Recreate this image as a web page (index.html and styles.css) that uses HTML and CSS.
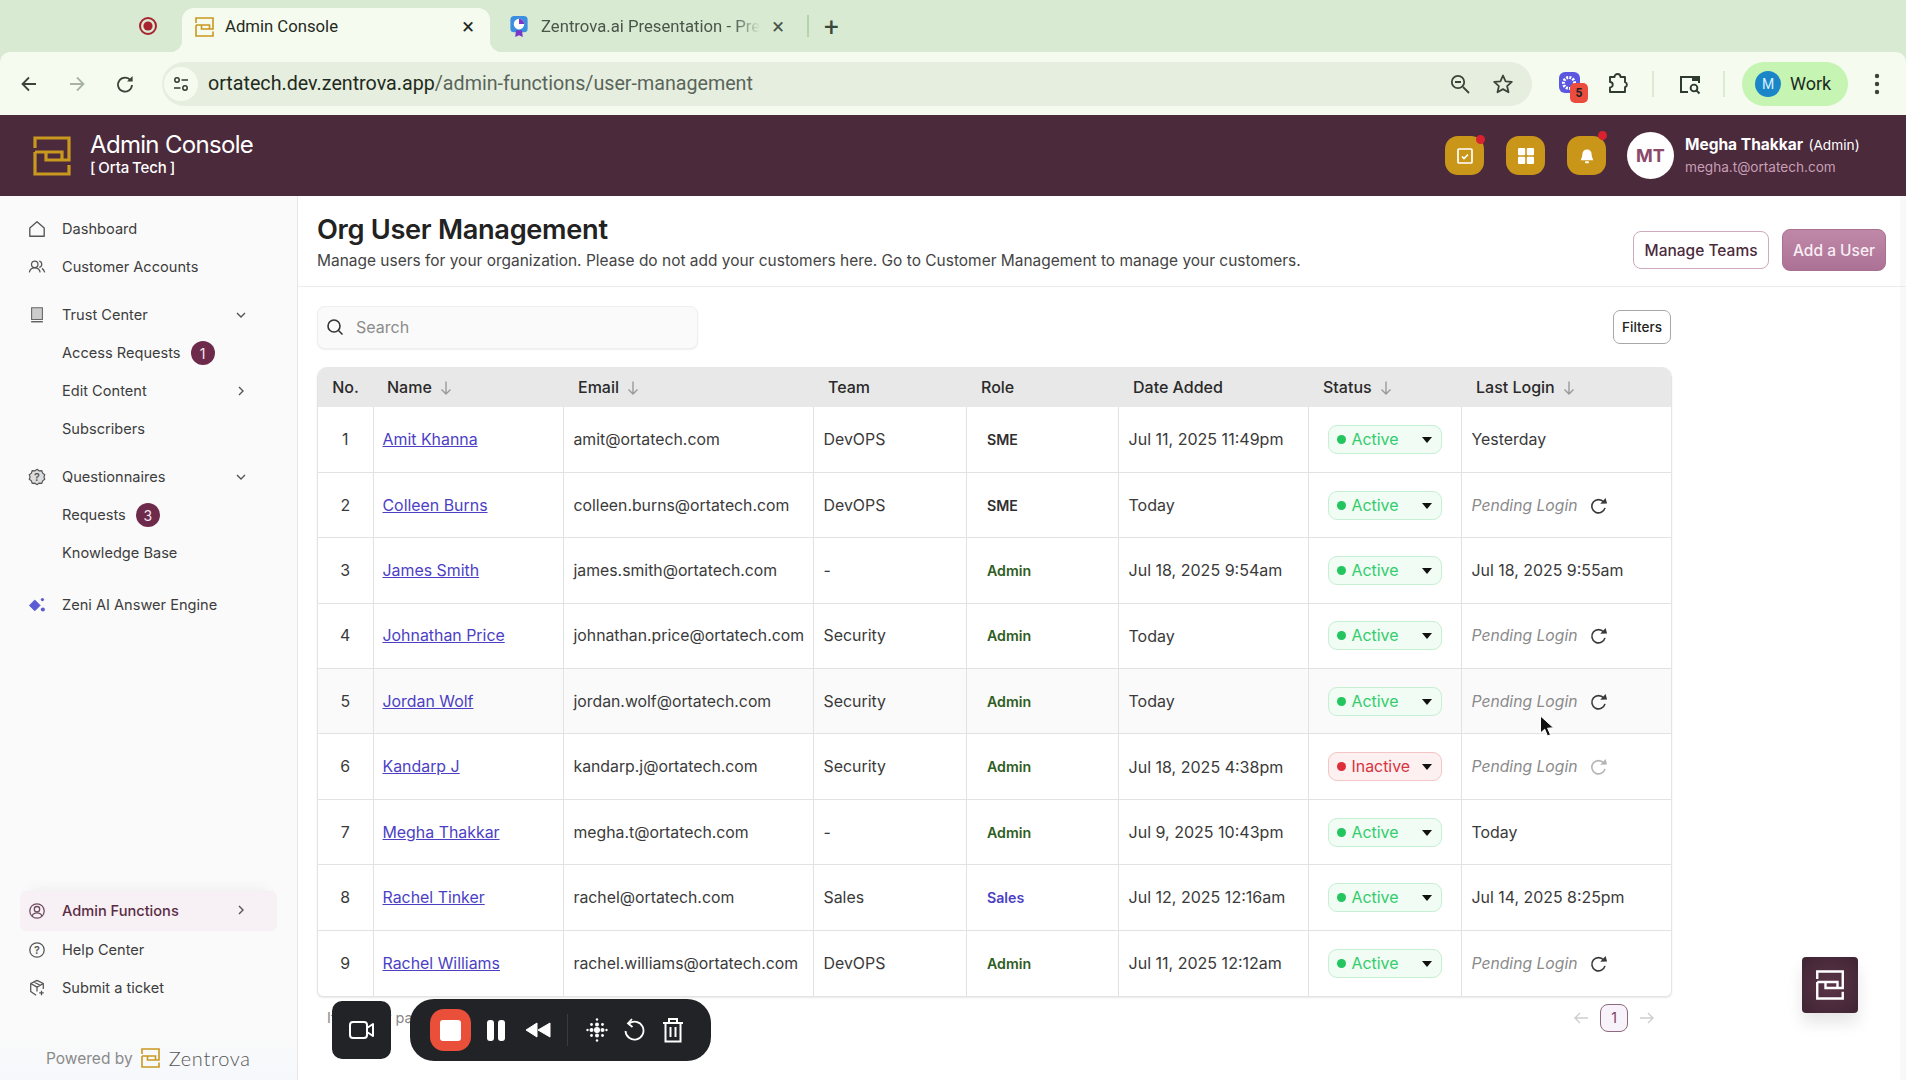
FILE: index.html
```html
<!DOCTYPE html>
<html lang="en">
<head>
<meta charset="utf-8">
<title>Admin Console</title>
<link rel="stylesheet" href="styles.css">
</head>
<body>
<svg class="defs" width="0" height="0" aria-hidden="true">
  <symbol id="zlogo" viewBox="0 0 38 40">
    <path d="M2 12V2H36V24H13V16M2 16H29V24M2 16V38H36V29" fill="none" stroke="currentColor" stroke-width="3.2" stroke-linejoin="miter"/>
  </symbol>
  <symbol id="down" viewBox="0 0 14 16"><path d="M7 1.5V14M2.5 9.5L7 14l4.5-4.5" fill="none" stroke="#9a9a9a" stroke-width="1.4"/></symbol>
  <symbol id="refresh" viewBox="0 0 20 20"><path d="M15.5 6.400A7 7 0 1 0 16.800 12.500" fill="none" stroke="currentColor" stroke-width="1.700"/><path d="M11.800 8.200l7.200-.2-1.500-6z" fill="currentColor"/></symbol>
  <symbol id="chev-d" viewBox="0 0 12 12"><path d="M2 4l4 4 4-4" fill="none" stroke="#555" stroke-width="1.4"/></symbol>
  <symbol id="chev-r" viewBox="0 0 12 12"><path d="M4 2l4 4-4 4" fill="none" stroke="#555" stroke-width="1.4"/></symbol>
</svg>

<div class="tabstrip">
  <svg class="rec-dot" viewBox="0 0 20 20" width="20" height="20"><circle cx="10" cy="10" r="8" fill="none" stroke="#a8232f" stroke-width="2"/><circle cx="10" cy="10" r="4.6" fill="#a8232f"/></svg>
  <div class="tab active">
    <svg class="tab-fav gold" width="19" height="20"><use href="#zlogo"/></svg>
    <span class="tab-title">Admin Console</span>
    <span class="tab-x">×</span>
  </div>
  <div class="tab second">
    <svg class="tab-fav" viewBox="0 0 20 24" width="20" height="23"><rect x="1" y="1" width="18" height="17" rx="4" fill="#3c8fe0"/><path d="M7 16l-1 7 4-2 4 2-1-7z" fill="#7a35c9"/><circle cx="10" cy="9.5" r="5.5" fill="#fff"/><path d="M10 9.5V4a5.5 5.5 0 0 1 5.5 5.5z" fill="#7a35c9"/></svg>
    <span class="tab-title fade">Zentrova.ai Presentation - Pre</span>
    <span class="tab-x dim">×</span>
  </div>
  <i class="tab-sep"></i>
  <span class="new-tab">+</span>
</div>

<div class="toolbar">
  <svg class="tb-ic" viewBox="0 0 20 20" width="20" height="20"><path d="M17 10H4M10 3.5L3.5 10l6.5 6.5" fill="none" stroke="#3a443a" stroke-width="1.8"/></svg>
  <svg class="tb-ic" viewBox="0 0 20 20" width="20" height="20"><path d="M3 10h13M10 3.5l6.5 6.5-6.5 6.5" fill="none" stroke="#a9b2a6" stroke-width="1.8"/></svg>
  <svg class="tb-ic" viewBox="0 0 20 20" width="20" height="20"><path d="M15.6 6.4A7 7 0 1 0 17 11" fill="none" stroke="#3a443a" stroke-width="1.8"/><path d="M12 7.6h5.6V2z" fill="#3a443a"/></svg>
  <div class="omnibox">
    <span class="site-info"><svg viewBox="0 0 20 20" width="20" height="20"><g fill="none" stroke="#2f3a30" stroke-width="1.5"><circle cx="6" cy="6" r="2.2"/><path d="M10.5 6H17M3 14h6.5"/><circle cx="14" cy="14" r="2.2"/></g></svg></span>
    <span class="url"><b>ortatech.dev.zentrova.app</b>/admin-functions/user-management</span>
    <svg class="omni-ic" viewBox="0 0 22 22" width="22" height="22"><g fill="none" stroke="#3a443a" stroke-width="1.8"><circle cx="9" cy="9" r="6.2"/><path d="M14 14l6 6M6 9h6"/></g></svg>
    <svg class="omni-ic" viewBox="0 0 22 22" width="22" height="22"><path d="M11 2.5l2.6 5.8 6.2.6-4.7 4.2 1.4 6.2L11 16.1l-5.5 3.2 1.4-6.2L2.2 8.9l6.2-.6z" fill="none" stroke="#3a443a" stroke-width="1.8" stroke-linejoin="round"/></svg>
  </div>
  <span class="ext">
    <svg class="ext-sq" viewBox="0 0 21 21" width="21" height="21"><rect width="21" height="21" rx="6" fill="#5b57e0"/><circle cx="10" cy="11" r="5.500" fill="none" stroke="#fff" stroke-width="3" stroke-dasharray="2 1.200"/></svg>
    <i class="ext-badge">5</i>
  </span>
  <svg class="puzzle" viewBox="0 0 24 24" width="24" height="24"><path d="M4 5h4.5a3 3 0 0 1 6 0H19v5.2a2.6 2.6 0 0 1 0 5V20H4v-4.5a2.6 2.6 0 0 0 0-5.5z" fill="none" stroke="#2f3a30" stroke-width="1.9" stroke-linejoin="round"/></svg>
  <i class="tb-sep"></i>
  <svg class="tabsearch" viewBox="0 0 24 24" width="24" height="24"><path d="M10 20H3V5h18v6" fill="none" stroke="#2f3a30" stroke-width="2"/><rect x="14" y="5" width="7" height="4" fill="#2f3a30"/><circle cx="16" cy="16" r="3.4" fill="none" stroke="#2f3a30" stroke-width="1.9"/><path d="M18.5 18.5l3 3" stroke="#2f3a30" stroke-width="1.9"/></svg>
  <i class="tb-sep two"></i>
  <div class="profile"><span class="profile-m">M</span><span>Work</span></div>
  <svg class="menu-dots" viewBox="0 0 6 22" width="6" height="22"><circle cx="3" cy="3" r="2.2"/><circle cx="3" cy="11" r="2.2"/><circle cx="3" cy="19" r="2.2"/></svg>
</div>

<header class="appbar">
  <svg class="app-logo gold" width="38" height="40"><use href="#zlogo"/></svg>
  <div class="app-name">
    <div class="app-title">Admin Console</div>
    <div class="app-org">[ Orta Tech ]</div>
  </div>
  <div class="app-actions">
    <span class="gold-btn dot"><svg viewBox="0 0 18 18" width="18" height="18"><rect x="2" y="2" width="14" height="14" rx="1" fill="none" stroke="#fff" stroke-width="1.7"/><path d="M6 9.5l2 2 4-4" fill="none" stroke="#fff" stroke-width="1.6"/></svg></span>
    <span class="gold-btn"><svg viewBox="0 0 18 18" width="18" height="18"><g fill="#fff"><rect x="1" y="1" width="7.2" height="7.2" rx="1"/><rect x="9.8" y="1" width="7.2" height="7.2" rx="1"/><rect x="1" y="9.8" width="7.2" height="7.2" rx="1"/><rect x="9.8" y="9.8" width="7.2" height="7.2" rx="1"/></g></svg></span>
    <span class="gold-btn dot high"><svg viewBox="0 0 18 18" width="18" height="18"><path d="M9 2.5a4.6 4.6 0 0 1 4.6 4.6c0 3.4 1.6 5 1.6 6.2H2.8c0-1.2 1.6-2.8 1.6-6.2A4.6 4.6 0 0 1 9 2.5z" fill="#fff"/><rect x="7" y="14.2" width="4" height="2" rx="1" fill="#fff"/></svg></span>
  </div>
  <div class="avatar">MT</div>
  <div class="user">
    <div class="user-name"><b>Megha Thakkar</b> <span>(Admin)</span></div>
    <div class="user-mail">megha.t@ortatech.com</div>
  </div>
</header>

<div class="app">
  <aside class="sidebar">
    <nav class="nav-top">
      <a class="nav-item"><svg class="nav-ic" viewBox="0 0 20 20"><path d="M2 9l8-7 8 7v9H2z" fill="none" stroke="#555" stroke-width="1.5" stroke-linejoin="round"/></svg>Dashboard</a>
      <a class="nav-item"><svg class="nav-ic" viewBox="0 0 20 20"><g fill="none" stroke="#555" stroke-width="1.4"><circle cx="7.5" cy="7" r="3.6"/><path d="M1.5 16c.6-3.6 3-5 6-5s5.400 1.400 6 5M12.500 3.500a3.600 3.600 0 0 1 0 7M15.500 11.500c1.500.8 2.500 2.300 3 4.500"/></g></svg>Customer Accounts</a>
      <a class="nav-item gap"><svg class="nav-ic" viewBox="0 0 20 20"><path d="M4 2h12v13H4z" fill="#ccc" stroke="#666" stroke-width="1.2"/><path d="M3.500 17.500h13" stroke="#555" stroke-width="1.500"/></svg>Trust Center<svg class="chev"><use href="#chev-d"/></svg></a>
      <a class="nav-item sub">Access Requests<span class="count">1</span></a>
      <a class="nav-item sub">Edit Content<svg class="chev"><use href="#chev-r"/></svg></a>
      <a class="nav-item sub">Subscribers</a>
      <a class="nav-item gap"><svg class="nav-ic" viewBox="0 0 20 20"><path d="M10 1.500l2.400 1.600 2.900-.1 1 2.700 2.300 1.800-.9 2.500.9 2.500-2.300 1.800-1 2.700-2.900-.1L10 18.500l-2.400-1.600-2.900.1-1-2.700-2.300-1.800.9-2.500-.9-2.500 2.300-1.800 1-2.700 2.900.1z" fill="#ddd" stroke="#555" stroke-width="1.300"/><text x="10" y="14" text-anchor="middle" class="q-mark">?</text></svg>Questionnaires<svg class="chev"><use href="#chev-d"/></svg></a>
      <a class="nav-item sub">Requests<span class="count">3</span></a>
      <a class="nav-item sub">Knowledge Base</a>
      <a class="nav-item gap-lg"><svg class="nav-ic" viewBox="0 0 20 20" fill="#5b5bd6"><path d="M7.500 4.500l6 6-6 6-6-6z" stroke="#5b5bd6" stroke-linejoin="round"/><circle cx="16" cy="4" r="1.800"/><circle cx="16.500" cy="15" r="2.300"/></svg>Zeni AI Answer Engine</a>
    </nav>
    <nav class="nav-bottom">
      <a class="nav-item current"><svg class="nav-ic" viewBox="0 0 20 20"><g fill="none" stroke="#6e4a5e" stroke-width="1.400"><circle cx="10" cy="10" r="8"/><circle cx="10" cy="8" r="3"/><path d="M4.500 15.500c1-2.500 3-3.500 5.500-3.500s4.500 1 5.500 3.500"/></g></svg>Admin Functions<svg class="chev"><use href="#chev-r"/></svg></a>
      <a class="nav-item"><svg class="nav-ic" viewBox="0 0 20 20"><circle cx="10" cy="10" r="8" fill="none" stroke="#555" stroke-width="1.400"/><text x="10" y="14.500" text-anchor="middle" class="q-mark">?</text></svg>Help Center</a>
      <a class="nav-item"><svg class="nav-ic" viewBox="0 0 20 20"><g fill="none" stroke="#555" stroke-width="1.400" stroke-linejoin="round"><path d="M10 1.500l7 3.500v6M10 1.500L3 5v9l6 4M3 5l7 4 7-4M10 9v5M6.500 3.300l7 3.700"/><path d="M15 13v5M12.500 15.500h5"/></g></svg>Submit a ticket</a>
    </nav>
    <div class="powered">
      <span>Powered by</span>
      <svg class="gold" width="19" height="20"><use href="#zlogo"/></svg>
      <span class="brand">Zentrova</span>
    </div>
  </aside>

  <main class="main">
    <section class="page-head">
      <div class="page-copy">
        <h1>Org User Management</h1>
        <p>Manage users for your organization. Please do not add your customers here. Go to Customer Management to manage your customers.</p>
      </div>
      <button class="btn outline">Manage Teams</button>
      <button class="btn fill">Add a User</button>
    </section>
    <section class="content">
      <div class="tools">
        <div class="search">
          <svg viewBox="0 0 18 18" width="18" height="18"><circle cx="8" cy="8" r="6" fill="none" stroke="#333" stroke-width="1.600"/><path d="M12.500 12.500l4 4" stroke="#333" stroke-width="1.600"/></svg>
          <span>Search</span>
        </div>
        <button class="filters">Filters</button>
      </div>
      <div class="table-wrap">
        <table class="users">
          <colgroup><col class="c-no"><col class="c-name"><col class="c-mail"><col class="c-team"><col class="c-role"><col class="c-date"><col class="c-status"><col class="c-last"></colgroup>
          <thead>
            <tr>
              <th class="no">No.</th>
              <th>Name<svg class="sort"><use href="#down"/></svg></th>
              <th>Email<svg class="sort"><use href="#down"/></svg></th>
              <th>Team</th>
              <th>Role</th>
              <th>Date Added</th>
              <th>Status<svg class="sort"><use href="#down"/></svg></th>
              <th>Last Login<svg class="sort"><use href="#down"/></svg></th>
            </tr>
          </thead>
          <tbody>
            <tr><td class="no">1</td><td><a>Amit Khanna</a></td><td>amit@ortatech.com</td><td>DevOPS</td><td><span class="role sme">SME</span></td><td>Jul 11, 2025 11:49pm</td><td><span class="status"><i></i>Active<u></u></span></td><td>Yesterday</td></tr>
            <tr><td class="no">2</td><td><a>Colleen Burns</a></td><td>colleen.burns@ortatech.com</td><td>DevOPS</td><td><span class="role sme">SME</span></td><td>Today</td><td><span class="status"><i></i>Active<u></u></span></td><td><em>Pending Login</em><svg class="again"><use href="#refresh"/></svg></td></tr>
            <tr><td class="no">3</td><td><a>James Smith</a></td><td>james.smith@ortatech.com</td><td>-</td><td><span class="role admin">Admin</span></td><td>Jul 18, 2025 9:54am</td><td><span class="status"><i></i>Active<u></u></span></td><td>Jul 18, 2025 9:55am</td></tr>
            <tr><td class="no">4</td><td><a>Johnathan Price</a></td><td>johnathan.price@ortatech.com</td><td>Security</td><td><span class="role admin">Admin</span></td><td>Today</td><td><span class="status"><i></i>Active<u></u></span></td><td><em>Pending Login</em><svg class="again"><use href="#refresh"/></svg></td></tr>
            <tr class="hover"><td class="no">5</td><td><a>Jordan Wolf</a></td><td>jordan.wolf@ortatech.com</td><td>Security</td><td><span class="role admin">Admin</span></td><td>Today</td><td><span class="status"><i></i>Active<u></u></span></td><td><em>Pending Login</em><svg class="again"><use href="#refresh"/></svg></td></tr>
            <tr><td class="no">6</td><td><a>Kandarp J</a></td><td>kandarp.j@ortatech.com</td><td>Security</td><td><span class="role admin">Admin</span></td><td>Jul 18, 2025 4:38pm</td><td><span class="status off"><i></i>Inactive<u></u></span></td><td><em>Pending Login</em><svg class="again faint"><use href="#refresh"/></svg></td></tr>
            <tr><td class="no">7</td><td><a>Megha Thakkar</a></td><td>megha.t@ortatech.com</td><td>-</td><td><span class="role admin">Admin</span></td><td>Jul 9, 2025 10:43pm</td><td><span class="status"><i></i>Active<u></u></span></td><td>Today</td></tr>
            <tr><td class="no">8</td><td><a>Rachel Tinker</a></td><td>rachel@ortatech.com</td><td>Sales</td><td><span class="role sales">Sales</span></td><td>Jul 12, 2025 12:16am</td><td><span class="status"><i></i>Active<u></u></span></td><td>Jul 14, 2025 8:25pm</td></tr>
            <tr><td class="no">9</td><td><a>Rachel Williams</a></td><td>rachel.williams@ortatech.com</td><td>DevOPS</td><td><span class="role admin">Admin</span></td><td>Jul 11, 2025 12:12am</td><td><span class="status"><i></i>Active<u></u></span></td><td><em>Pending Login</em><svg class="again"><use href="#refresh"/></svg></td></tr>
          </tbody>
        </table>
      </div>
      <div class="table-foot">
        <span class="per-page">Items per page</span>
        <div class="pager">
          <svg viewBox="0 0 16 14" width="16" height="14"><path d="M15 7H2M7 2L2 7l5 5" fill="none" stroke="#cfcdd0" stroke-width="1.400"/></svg>
          <span class="page-num">1</span>
          <svg viewBox="0 0 16 14" width="16" height="14"><path d="M1 7h13M9 2l5 5-5 5" fill="none" stroke="#cfcdd0" stroke-width="1.400"/></svg>
        </div>
      </div>
    </section>
  </main>
</div>

<div class="recorder-cam">
  <svg viewBox="0 0 26 20" width="26" height="20"><rect x="1" y="2" width="17" height="16" rx="3" fill="none" stroke="#fff" stroke-width="2"/><path d="M18 8l6-4v12l-6-4z" fill="none" stroke="#fff" stroke-width="2" stroke-linejoin="round"/></svg>
</div>
<div class="recorder">
  <span class="rec-stop"><i></i></span>
  <span class="rec-pause"><i></i><i></i></span>
  <svg class="rec-back" viewBox="0 0 26 16" width="26" height="16"><path d="M12 1v14L1 8zM25 1v14L13 8z" fill="#fff" stroke="#fff" stroke-linejoin="round"/></svg>
  <i class="rec-sep"></i>
  <svg class="rec-grid" viewBox="0 0 22 24" width="22" height="24" fill="#fff"><circle cx="11" cy="12" r="3"/><circle cx="5.500" cy="12" r="2"/><circle cx="16.500" cy="12" r="2"/><circle cx="11" cy="6.500" r="2"/><circle cx="11" cy="17.500" r="2"/><circle cx="5.500" cy="6.500" r="1.400"/><circle cx="16.500" cy="6.500" r="1.400"/><circle cx="5.500" cy="17.500" r="1.400"/><circle cx="16.500" cy="17.500" r="1.400"/><circle cx="1.500" cy="12" r="1.200"/><circle cx="20.500" cy="12" r="1.200"/><circle cx="11" cy="1.500" r="1.200"/><circle cx="11" cy="22.500" r="1.200"/></svg>
  <svg class="rec-reset" viewBox="0 0 22 24" width="22" height="24"><path d="M6 5.500A9 9 0 1 1 2.500 13" fill="none" stroke="#fff" stroke-width="1.800"/><path d="M9 1L5 5.500 9.500 9" fill="none" stroke="#fff" stroke-width="1.800"/></svg>
  <svg class="rec-trash" viewBox="0 0 22 26" width="22" height="26"><g fill="none" stroke="#fff" stroke-width="2"><path d="M1 6h20M7 6V2h8v4M3.500 6v18.500h15V6M8.500 10v10M13.500 10v10"/></g></svg>
</div>

<div class="fab"><svg width="30" height="30"><use href="#zlogo"/></svg></div>
<svg class="cursor" viewBox="0 0 16 24" width="16" height="24"><path d="M1.500 1l0 17 4.200-3.800 2.800 6.800 3-1.300-2.900-6.500 5.900-.4z" fill="#111" stroke="#fff" stroke-width="1"/></svg>
</body>
</html>
```
FILE: styles.css
```css
* { box-sizing: border-box; }
html, body { margin: 0; padding: 0; height: 1080px; width: 1906px; overflow: hidden; }
body { font-family: "Inter", "Liberation Sans", sans-serif; color: #333; background: #d8ead2; display: flex; flex-direction: column; position: relative; }
.defs { position: absolute; }
.gold { color: #c9981f; }

/* browser chrome */
.tabstrip { height: 52px; background: #d8ead2; display: flex; align-items: flex-end; padding-left: 138px; flex: none; font-family: "Roboto", sans-serif; font-size: 16.700px; }
.rec-dot { margin-bottom: 16px; margin-right: 24px; }
.tab { height: 44px; display: flex; align-items: center; padding-bottom: 7px; position: relative; }
.tab.active { width: 308px; background: #f6fbf0; border-radius: 12px 12px 0 0; padding-left: 13px; padding-right: 16px; color: #1f2a20; }
.tab.active::before, .tab.active::after { content: ""; position: absolute; bottom: 0; width: 12px; height: 12px; }
.tab.active::before { left: -12px; background: radial-gradient(circle at 0 0, transparent 12px, #f6fbf0 12.500px); }
.tab.active::after { right: -12px; background: radial-gradient(circle at 100% 0, transparent 12px, #f6fbf0 12.500px); }
.tab.second { width: 309px; padding-left: 19px; padding-right: 15px; color: #4a554a; }
.tab-fav { flex: none; margin-right: 11px; }
.tab.second .tab-fav { margin-right: 12px; }
.tab-title { flex: 1; white-space: nowrap; overflow: hidden; }
.tab-title.fade { -webkit-mask-image: linear-gradient(90deg, #000 88%, transparent); mask-image: linear-gradient(90deg, #000 88%, transparent); }
.tab-x { font-size: 22px; line-height: 20px; color: #1f2a20; margin-left: 12px; }
.tab-x.dim { color: #4a554a; margin-left: 12px; }
.tab-sep { width: 2px; height: 22px; background: #b8d2ae; margin-bottom: 15px; margin-left: 8px; }
.new-tab { font-size: 26px; line-height: 26px; color: #3b463c; margin-bottom: 12px; margin-left: 15px; }

.toolbar { height: 63px; background: #f6fbf0; border-radius: 10px 10px 0 0; display: flex; align-items: center; padding-left: 19px; flex: none; font-family: "Roboto", sans-serif; }
.tb-ic { margin-right: 28px; flex: none; }
.toolbar .tb-ic:nth-child(3) { margin-right: 27px; }
.omnibox { width: 1370px; height: 44px; border-radius: 22px; background: #e6efdf; display: flex; align-items: center; padding-right: 18px; flex: none; margin-right: 27px; }
.site-info { width: 34px; height: 34px; border-radius: 50%; background: #f6fbf0; display: flex; align-items: center; justify-content: center; margin-left: 2px; margin-right: 10px; }
.url { flex: 1; font-size: 19.680px; color: #5a655b; white-space: nowrap; }
.url b { font-weight: 400; color: #1f2a20; }
.omni-ic { margin-left: 21px; flex: none; }
.ext { position: relative; width: 24px; height: 24px; flex: none; }
.ext-sq { position: absolute; left: 0; top: 0; }
.ext-badge { position: absolute; left: 11px; top: 11px; width: 18px; height: 20px; border-radius: 5px; background: #ea4d3d; font-style: normal; font-size: 12px; font-weight: 700; color: #222; text-align: center; line-height: 20px; }
.puzzle { margin-left: 23px; flex: none; }
.tb-sep { width: 2px; height: 26px; background: #dcead4; margin-left: 22px; flex: none; }
.tabsearch { margin-left: 24px; flex: none; }
.tb-sep.two { margin-left: 21px; }
.profile { width: 106px; height: 44px; border-radius: 22px; background: #c5f4b3; margin-left: 17px; display: flex; align-items: center; gap: 9px; padding-left: 13px; font-size: 18px; color: #1d2a1e; flex: none; }
.profile-m { width: 26px; height: 26px; border-radius: 50%; background: #1a86c8; color: #d8f0ff; font-size: 14px; display: flex; align-items: center; justify-content: center; }
.menu-dots { margin-left: 26px; fill: #3a443a; flex: none; }

/* app header */
.appbar { height: 81px; background: #4b2a3c; display: flex; align-items: center; padding-left: 33px; color: #fff; flex: none; }
.app-logo { flex: none; margin-right: 19px; }
.app-title { font-size: 24px; line-height: 28px; letter-spacing: -0.68px; margin-top: -3px; }
.app-org { font-size: 15px; line-height: 18px; font-weight: 500; letter-spacing: -0.1px; word-spacing: -1px; }
.app-actions { margin-left: auto; display: flex; gap: 22px; }
.gold-btn { position: relative; width: 39px; height: 39px; border-radius: 13px; background: #c9961a; display: flex; align-items: center; justify-content: center; }
.gold-btn.dot::after { content: ""; position: absolute; right: -1px; top: -1px; width: 9px; height: 9px; border-radius: 50%; background: #d8222f; }
.gold-btn.high::after { top: -5px; right: -1px; }
.avatar { width: 47px; height: 47px; border-radius: 50%; background: #fff; color: #8a4a6a; font-weight: 700; font-size: 18px; display: flex; align-items: center; justify-content: center; margin-left: 21px; }
.user { margin-left: 11px; width: 221px; flex: none; }
.user-name { font-size: 15.500px; line-height: 20px; }
.user-name span { font-size: 13.700px; margin-left: 1px; }
.user-name b { font-weight: 700; }
.user-mail { font-size: 13.600px; line-height: 20px; color: #c99fb5; margin-top: 2px; }

/* layout */
.app { flex: 1; display: flex; min-height: 0; }
.sidebar { width: 298px; flex: none; background: #fafafa; border-right: 1px solid #e6e6e6; display: flex; flex-direction: column; padding: 14px 20px 0; font-size: 14.600px; color: #3d3d3d; }
.nav-top { flex: 1; }
.nav-item { display: flex; align-items: center; height: 38px; padding-left: 8px; position: relative; }
.nav-item.gap { margin-top: 10px; }
.nav-item.gap-lg { margin-top: 14px; }
.nav-item.sub { padding-left: 42px; }
.nav-ic { width: 18px; height: 18px; margin-right: 16px; flex: none; }
.q-mark { font-family: "Inter", sans-serif; font-size: 12px; font-weight: 600; fill: #555; }
.chev { position: absolute; left: 215px; top: 13px; width: 12px; height: 12px; }
.count { width: 24px; height: 24px; border-radius: 50%; background: #6e2a4a; color: #f3e6ec; font-size: 14px; display: flex; align-items: center; justify-content: center; margin-left: 10px; }
.nav-bottom { padding-bottom: 29px; }
.nav-item.current { height: 40px; background: #f7f0f4; border-radius: 6px; color: #5a2c44; box-shadow: 0 -12px 12px -10px #eee; font-weight: 500; }
.powered { margin: 0 -20px; height: 44px; background: linear-gradient(180deg, #fafafa, #f6f8fc); display: flex; align-items: center; padding-left: 46px; gap: 8px; font-size: 15.500px; color: #8a8a8a; }
.brand { font-family: "Lato", sans-serif; font-size: 20px; letter-spacing: 0.7px; color: #555; margin-left: 1px; font-weight: 300; }

.main { flex: 1; min-width: 0; background: #fff; box-shadow: inset -6px 0 0 #f8f8f8; }
.page-head { height: 91px; border-bottom: 1px solid #ececec; display: flex; align-items: center; padding: 0 20px 0 19px; }
.page-copy { flex: 1; padding-bottom: 1px; }
h1 { margin: 3px 0 3px; font-size: 27.200px; line-height: 34px; font-weight: 600; color: #222; letter-spacing: -0.3px; }
.page-copy p { margin: 0; font-size: 15.470px; line-height: 22px; color: #444; }
.btn { font-family: inherit; font-size: 15.500px; font-weight: 500; border-radius: 8px; margin-top: 18px; }
.btn.outline { width: 136px; height: 38px; background: #fff; border: 1.5px solid #cfa9bd; color: #4b2a3c; }
.btn.fill { width: 104px; height: 42px; margin-left: 13px; background: linear-gradient(180deg, #c088a8, #ac7296); border: 1px solid #a8708f; color: #f9eef4; }
.content { padding: 0 0 0 19px; width: 1375px; }
.tools { display: flex; align-items: center; justify-content: space-between; height: 80px; }
.search { width: 381px; height: 43px; background: #fafafa; border: 1px solid #efefef; border-radius: 8px; display: flex; align-items: center; padding-left: 8px; gap: 12px; font-size: 16px; color: #8b8b8b; box-shadow: 0 1px 2px #eee; }
.filters { width: 58px; height: 34px; background: #fff; border: 1.5px solid #a8a8a8; border-radius: 7px; font-family: inherit; font-size: 13.500px; font-weight: 500; color: #222; margin-right: 2px; }
.table-wrap { width: 1355px; border: 1px solid #e4e4e4; border-top: 0; border-radius: 10px 10px 6px 6px; overflow: hidden; box-shadow: 0 1px 2px #e8e8e8; }
.users { width: 100%; border-collapse: collapse; table-layout: fixed; font-size: 15.900px; color: #3a3a3a; }
.c-no { width: 55px; } .c-name { width: 190px; } .c-mail { width: 250px; } .c-team { width: 153px; } .c-role { width: 152px; } .c-date { width: 190px; } .c-status { width: 153px; }
.users thead tr { height: 40px; background: #e8e8e8; }
.users th { text-align: left; font-weight: 500; font-size: 16px; color: #2a2a2a; padding: 0 0 0 15px; white-space: nowrap; }
.users th:nth-child(2) { padding-left: 14px; }
.users th.no { padding: 0; text-align: center; }
.users tbody tr { height: 65.400px; }
.users tbody tr.hover { background: #fafafa; }
.users td { padding: 0 0 0 10px; border-left: 1px solid #e2e2e2; border-bottom: 1px solid #e2e2e2; white-space: nowrap; }
.users td:nth-child(3) { font-size: 15.800px; }
.users td:nth-child(6) { font-size: 16.050px; }
.users td:first-child { border-left: 0; }
.users tbody tr:last-child td { border-bottom: 0; }
.users td.no { padding: 0; text-align: center; }
.users a { color: #4c3fc4; text-decoration: underline; margin-left: -1px; }
.users em { color: #8a8a8a; font-style: italic; font-size: 15.700px; }
.sort { width: 14px; height: 16px; margin-left: 7px; vertical-align: -3px; }
.again { width: 19px; height: 19px; margin-left: 12px; vertical-align: -4px; color: #3a3a3a; }
.again.faint { color: #b5b5b5; }
.role { font-size: 14.200px; font-weight: 600; margin-left: 10.500px; }
.role.sme { color: #2f2f2f; }
.role.admin { color: #2e5d22; }
.role.sales { color: #4c3fc4; }
.status { display: flex; align-items: center; width: 114px; height: 29px; margin-left: 9px; padding-left: 8px; border-radius: 9px; background: #f0fcf4; border: 1px solid #c6efd3; color: #34cc6c; position: relative; }
.status i { width: 9px; height: 9px; border-radius: 50%; background: #22c55e; margin-right: 6px; }
.status u { position: absolute; right: 9px; top: 11px; width: 0; height: 0; border: 5px solid transparent; border-top: 6px solid #111; border-bottom: 0; }
.status.off { background: #fdf0f0; border-color: #f3c5c5; color: #d8333f; }
.status.off i { background: #e02d3c; }
.table-foot { display: flex; align-items: center; justify-content: space-between; height: 42px; width: 1355px; }
.per-page { font-size: 14.500px; color: #888; margin-left: 10px; }
.pager { display: flex; align-items: center; gap: 11px; margin-right: 17px; }
.page-num { width: 28px; height: 28px; border: 1px solid #8a6a7c; border-radius: 8px; background: #f8f2fa; color: #7a3f62; font-size: 14px; display: flex; align-items: center; justify-content: center; }

/* overlays */
.recorder-cam { position: absolute; left: 332px; top: 1001px; width: 59px; height: 58px; background: #222326; border-radius: 10px; display: flex; align-items: center; justify-content: center; }
.recorder { position: absolute; left: 410px; top: 999px; width: 301px; height: 62px; background: #222326; border-radius: 24px; display: flex; align-items: center; padding-left: 20px; }
.rec-stop { width: 41px; height: 42px; border-radius: 14px; background: #ea4f3a; display: flex; align-items: center; justify-content: center; flex: none; }
.rec-stop i { width: 21px; height: 21px; border-radius: 3px; background: #fff; }
.rec-pause { display: flex; gap: 4px; margin-left: 16px; flex: none; }
.rec-pause i { width: 7px; height: 21px; border-radius: 3px; background: #fff; }
.rec-back { margin-left: 20px; flex: none; }
.rec-sep { width: 1px; height: 32px; background: #3a3b3e; margin-left: 16px; flex: none; }
.rec-grid { margin-left: 18px; flex: none; }
.rec-reset { margin-left: 15px; flex: none; }
.rec-trash { margin-left: 17px; flex: none; }
.fab { position: absolute; left: 1802px; top: 957px; width: 56px; height: 56px; background: radial-gradient(circle, #5a3448, #3f2432); border-radius: 4px; display: flex; align-items: center; justify-content: center; color: #fff; box-shadow: 0 10px 16px rgba(0,0,0,.10); }
.cursor { position: absolute; left: 1539px; top: 715px; }
```
